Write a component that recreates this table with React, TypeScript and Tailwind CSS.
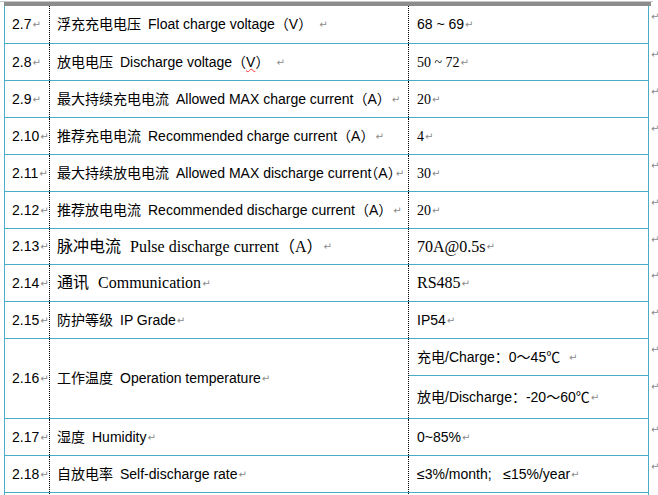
import React from 'react';

type Row = {
  no: string;
  cn: string;
  en: string;
  unit?: string;
  serif?: boolean;
  val: string[];
  valSerif?: boolean;
  valBig?: boolean;
  h: string;
  squiggle?: boolean;
  gap?: boolean;
  tight?: boolean;
};

const sans = "font-['Liberation_Sans','Noto_Sans_CJK_SC',sans-serif]";
const serif = "font-['Liberation_Serif','Noto_Sans_CJK_SC',serif]";

const rows: Row[] = [
  { no: '2.7', cn: '浮充充电电压', en: 'Float charge voltage', unit: 'V', gap: true, val: ['68 ~ 69'], h: 'h-[38px]' },
  { no: '2.8', cn: '放电电压', en: 'Discharge voltage', unit: 'V', squiggle: true, gap: true, val: ['50 ~ 72'], valSerif: true, h: 'h-[37px]' },
  { no: '2.9', cn: '最大持续充电电流', en: 'Allowed MAX charge current', unit: 'A', val: ['20'], valSerif: true, h: 'h-[37px]' },
  { no: '2.10', cn: '推荐充电电流', en: 'Recommended charge current', unit: 'A', val: ['4'], valSerif: true, h: 'h-[37px]' },
  { no: '2.11', cn: '最大持续放电电流', en: 'Allowed MAX discharge current', unit: 'A', tight: true, val: ['30'], valSerif: true, h: 'h-[37px]' },
  { no: '2.12', cn: '推荐放电电流', en: 'Recommended discharge current', unit: 'A', val: ['20'], valSerif: true, h: 'h-[37px]' },
  { no: '2.13', cn: '脉冲电流', en: 'Pulse discharge current', unit: 'A', serif: true, val: ['70A@0.5s'], valSerif: true, valBig: true, h: 'h-[36px]' },
  { no: '2.14', cn: '通讯', en: 'Communication', serif: true, val: ['RS485'], valSerif: true, valBig: true, h: 'h-[37px]' },
  { no: '2.15', cn: '防护等级', en: 'IP Grade', val: ['IP54'], h: 'h-[37px]' },
  { no: '2.16', cn: '工作温度', en: 'Operation temperature', val: ['充电/Charge：0～45℃  ', '放电/Discharge：-20～60℃'], h: 'h-[80px]' },
  { no: '2.17', cn: '湿度', en: 'Humidity', val: ['0~85%'], h: 'h-[37px]' },
  { no: '2.18', cn: '自放电率', en: 'Self-discharge rate', val: ['≤3%/month;   ≤15%/year'], h: 'h-[37px]' },
];

function Mark() {
  return <span className="ml-[1px] text-[10px] text-[#8a8a8a] font-['DejaVu_Sans',sans-serif]">↵</span>;
}

function Divider() {
  return <div className="w-px self-stretch border-l border-dotted border-black" />;
}

function EndMark({ h }: { h: string }) {
  return (
    <div className={`${h} w-[10px] pl-[2px] pt-[6px] text-[10px] leading-none text-[#8a8a8a] font-['DejaVu_Sans',sans-serif]`}>
      ↵
    </div>
  );
}

function TableRow({ r }: { r: Row }) {
  const multi = r.val.length > 1;
  return (
    <div className={`flex ${r.h}`}>
      <div className="flex w-[645px] border-x border-b border-[#4bacc6]">
        <div className={`w-[44px] flex items-center pl-[7px] text-[14px] text-black ${sans}`}>
          {r.no}
          <Mark />
        </div>
        <Divider />
        <div
          className={`w-[358px] flex items-center pl-[7px] text-black whitespace-pre ${
            r.serif ? `${serif} text-[16px]` : `${sans} text-[14px]`
          }`}
        >
          <span className={sans}>{r.cn}</span>
          <span className={r.serif ? 'ml-[9px]' : 'ml-[7px]'}>{r.en}</span>
          {r.unit && (
            <span className={r.tight ? "[font-feature-settings:'halt']" : ''}>
              （
              <span className={r.squiggle ? 'underline decoration-wavy decoration-red-500 decoration-1' : ''}>{r.unit}</span>）
            </span>
          )}
          {r.gap && <span className="w-[6px]" />}
          <Mark />
        </div>
        <Divider />
        {multi ? (
          <div className="w-[239px] flex flex-col">
            <div className={`h-[37px] flex items-center pl-[8px] border-b border-[#4bacc6] text-[14px] text-black whitespace-pre ${sans}`}>
              {r.val[0]}
              <Mark />
            </div>
            <div className={`flex-1 flex items-center pl-[8px] text-[14px] text-black whitespace-pre ${sans}`}>
              {r.val[1]}
              <Mark />
            </div>
          </div>
        ) : (
          <div
            className={`w-[239px] flex items-center pl-[8px] text-black whitespace-pre ${r.valSerif ? serif : sans} ${
              r.valBig ? 'text-[16px]' : 'text-[14px]'
            }`}
          >
            {r.val[0]}
            <Mark />
          </div>
        )}
      </div>
      {multi ? (
        <div className="flex flex-col">
          <EndMark h="h-[37px]" />
          <EndMark h="h-[43px]" />
        </div>
      ) : (
        <EndMark h={r.h} />
      )}
    </div>
  );
}

export default function App() {
  return (
    <div className="w-[658px] h-[495px] overflow-hidden bg-white">
      <div className="mt-[1px] h-px w-[653px] bg-[#c8c8c8]" />
      <div className="ml-[4px] h-[4px] w-[647px] bg-[#8c8c8c]" />
      <div className="ml-[4px] flex flex-col">
        {rows.map((r) => (
          <TableRow key={r.no} r={r} />
        ))}
        <div className="flex h-[37px]">
          <div className="flex w-[645px] border-x border-[#4bacc6]">
            <div className="w-[44px]" />
            <Divider />
            <div className="w-[358px]" />
            <Divider />
            <div className="w-[239px]" />
          </div>
        </div>
      </div>
    </div>
  );
}
